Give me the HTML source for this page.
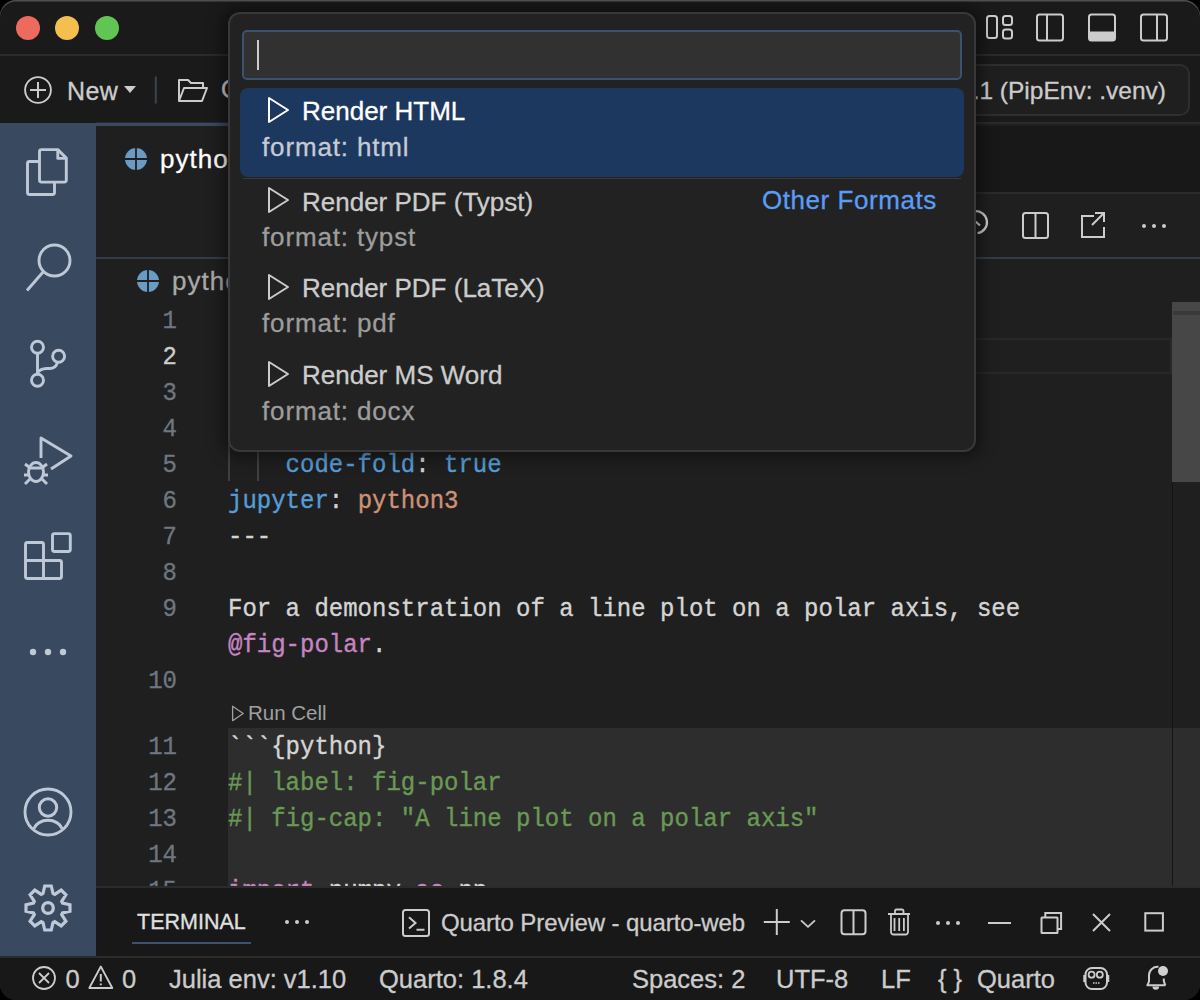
<!DOCTYPE html>
<html><head><meta charset="utf-8">
<style>
*{margin:0;padding:0;box-sizing:border-box}
html,body{width:1200px;height:1000px;overflow:hidden;background:#000}
body{font-family:"Liberation Sans",sans-serif;position:relative}
.win{position:absolute;left:0;top:0;width:1200px;height:1000px;border-radius:16px;overflow:hidden;background:#1f1f1f}
.winb{position:absolute;left:0;top:0;width:1200px;height:1000px;border-radius:16px;box-shadow:inset 0 1.5px 0 #4e4e4e;pointer-events:none;z-index:50}
.abs{position:absolute}
.t{position:absolute;white-space:pre;line-height:1;-webkit-text-stroke:0.3px currentColor}
.dot{position:absolute;width:24px;height:24px;border-radius:50%;top:16px}
.mono{font-family:"Liberation Mono",monospace;font-size:24px}
svg{position:absolute;overflow:visible}
.ln{position:absolute;left:96px;width:81px;transform:scaleY(1.1);transform-origin:0 18.4px;-webkit-text-stroke:0.3px currentColor;text-align:right;font-family:"Liberation Mono",monospace;font-size:24px;line-height:1;color:#6e7681}
.cl{position:absolute;left:228px;transform:scaleY(1.1);transform-origin:0 18.4px;-webkit-text-stroke:0.35px currentColor;font-family:"Liberation Mono",monospace;font-size:24px;line-height:1;white-space:pre;color:#d4d4d4}
.kw{color:#569cd6}.str{color:#ce9178}.cm{color:#6a9955}.pu{color:#c586c0}
.sb{position:absolute;top:967px;font-size:25.5px;line-height:1;white-space:pre;color:#cccccc;-webkit-text-stroke:0.3px currentColor}
</style></head><body>
<div class="win">
  <!-- title bar -->
  <div class="abs" style="left:0;top:0;width:1200px;height:55px;background:#1a1a1a"></div>
  <div class="abs" style="left:0;top:54px;width:1200px;height:2px;background:#2b2b2b"></div>
  <div class="dot" style="left:16px;background:#ec6a5e"></div>
  <div class="dot" style="left:55px;background:#f4bf4f"></div>
  <div class="dot" style="left:95px;background:#61c554"></div>
  <svg style="left:0;top:0" width="1200" height="56" fill="none" stroke="#cccccc" stroke-width="2">
    <rect x="987" y="16" width="10" height="22" rx="2.5"/>
    <rect x="1003" y="16" width="9" height="9" rx="2.5"/>
    <rect x="1003" y="29.5" width="9" height="9" rx="2.5"/>
    <rect x="1037" y="14.5" width="26" height="26" rx="2.5"/>
    <line x1="1047" y1="14.5" x2="1047" y2="40.5"/>
    <rect x="1089" y="14.5" width="26" height="26" rx="2.5"/>
    <path d="M1089 31.5h26v6a3 3 0 0 1 -3 3h-20a3 3 0 0 1 -3 -3z" fill="#cccccc" stroke="none"/>
    <rect x="1141" y="14.5" width="26" height="26" rx="2.5"/>
    <line x1="1157" y1="14.5" x2="1157" y2="40.5"/>
  </svg>

  <!-- toolbar -->
  <div class="abs" style="left:0;top:56px;width:1200px;height:68px;background:#1a1a1a"></div>
  <svg style="left:0;top:0" width="1200" height="124" fill="none" stroke="#cccccc" stroke-width="2">
    <circle cx="38" cy="90" r="12.9" stroke-width="1.9"/>
    <line x1="38" y1="82" x2="38" y2="98"/><line x1="30" y1="90" x2="46" y2="90"/>
    <path d="M124 86h12l-6 7z" fill="#cccccc" stroke="none"/>
    <line x1="155.8" y1="76.5" x2="155.8" y2="103.5" stroke="#3b4350" stroke-width="2"/>
    <path d="M179 101V80h9l3 3h12v5M179 101l5-13h23l-5 13z" stroke-linejoin="round"/>
  </svg>
  <div class="t" style="left:67px;top:78.5px;font-size:25px;letter-spacing:0.4px;color:#cccccc">New</div>
  <div class="t" style="left:221px;top:77px;font-size:25.5px;color:#cccccc">Open</div>
  <div class="abs" style="left:900px;top:64px;width:290px;height:52px;border:2px solid #2e2e2e;border-radius:10px;background:#1f1f1f"></div>
  <div class="t" style="left:959px;top:79px;font-size:24.5px;color:#cccccc">3.1 (PipEnv: .venv)</div>

  <!-- activity bar -->
  <div class="abs" style="left:0;top:123px;width:96px;height:834px;background:#384960"></div>
  <svg style="left:0;top:0" width="96" height="1000" fill="none" stroke="#bfc8d6" stroke-width="2.9" stroke-linejoin="round">
    <path d="M41.5 149.6h16.3l8.5 8.5v22a2 2 0 0 1-2 2H41.5a2 2 0 0 1-2-2V151.6a2 2 0 0 1 2-2z"/>
    <path d="M57.8 149.6v8.8h8.5"/>
    <path d="M39.5 161.5h-10a2 2 0 0 0-2 2v29a2 2 0 0 0 2 2h23a2 2 0 0 0 2-2v-10.3"/>
    <circle cx="54.5" cy="260.5" r="15.5"/>
    <line x1="43.5" y1="271.5" x2="27" y2="290.5"/>
    <circle cx="37.5" cy="347.3" r="6"/><circle cx="58.6" cy="356.3" r="6"/><circle cx="37.5" cy="380.3" r="6"/>
    <path d="M37.5 353.3v21M57.5 362.3c-1 4-4 6.2-8 6.2h-3c-4 0-8.5 2-9 5"/>
    <path d="M41 458V438l30 18l-20 13"/>
    <ellipse cx="36" cy="472" rx="7.5" ry="9.5"/>
    <path d="M28 468h16M24 475h5M43 475h5M25 464l4 3M47 464l-4 3M25 484l5-5M47 484l-5-5"/>
    <path d="M25.5 544.5a2 2 0 0 1 2-2h14a2 2 0 0 1 2 2v16h16a2 2 0 0 1 2 2v14a2 2 0 0 1-2 2H27.5a2 2 0 0 1-2-2z"/>
    <path d="M25.5 560.5h18v18"/>
    <rect x="52.5" y="533.6" width="17.8" height="17.9" rx="2"/>
    <circle cx="48" cy="812" r="23"/>
    <circle cx="48" cy="807.5" r="8.7" stroke-width="3"/>
    <path d="M34 828.5a14.5 11 0 0 1 28 0" stroke-width="3"/>
    <circle cx="48" cy="908" r="5.3" stroke-width="3.3"/>
  </svg>
  <svg style="left:0;top:0" width="96" height="1000">
    <circle cx="33" cy="652" r="3.2" fill="#bfc8d6"/><circle cx="48" cy="652" r="3.2" fill="#bfc8d6"/><circle cx="63" cy="652" r="3.2" fill="#bfc8d6"/>
    <path id="gear" fill="none" stroke="#bfc8d6" stroke-width="3.2" stroke-linejoin="miter" d="M43.0 893.5 L44.7 886.0 L51.3 886.0 L53.0 893.5 L54.7 894.3 L61.2 890.1 L65.9 894.8 L61.7 901.3 L62.5 903.0 L70.0 904.7 L70.0 911.3 L62.5 913.0 L61.7 914.7 L65.9 921.2 L61.2 925.9 L54.7 921.7 L53.0 922.5 L51.3 930.0 L44.7 930.0 L43.0 922.5 L41.3 921.7 L34.8 925.9 L30.1 921.2 L34.3 914.7 L33.5 913.0 L26.0 911.3 L26.0 904.7 L33.5 903.0 L34.3 901.3 L30.1 894.8 L34.8 890.1 L41.3 894.3Z"/>
  </svg>

  <!-- editor -->
  <div class="abs" style="left:96px;top:122px;width:1104px;height:2px;background:#2b2b2b"></div>
  <div class="abs" style="left:96px;top:123px;width:500px;height:3px;background:#3a4a62"></div>
  <div class="abs" style="left:96px;top:126px;width:1104px;height:66px;background:#181818"></div>
  <div class="abs" style="left:96px;top:192px;width:1104px;height:65px;background:#1f1f1f;border-top:2px solid #2b2b2b"></div>
  <div class="abs" style="left:96px;top:126px;width:500px;height:131px;background:#1f1f1f"></div>
  <div class="abs" style="left:96px;top:257px;width:1104px;height:2px;background:#363d48"></div>
  <svg style="left:0;top:0" width="1200" height="300">
    <circle cx="136" cy="159" r="11" fill="#6a9bc3"/>
    <path d="M136 148v22M125 159h22" stroke="#1f1f1f" stroke-width="1.8"/>
    <circle cx="148" cy="281" r="11" fill="#6a9bc3"/>
    <path d="M148 270v22M137 281h22" stroke="#1f1f1f" stroke-width="1.8"/>
  </svg>
  <div class="t" style="left:160px;top:146px;font-size:26px;letter-spacing:1px;color:#ffffff">python.qmd</div>
  <div class="t" style="left:172px;top:268px;font-size:26px;letter-spacing:1px;color:#a9a9a9">python.qmd</div>
  <svg style="left:0;top:0" width="1200" height="300" fill="none" stroke="#cccccc" stroke-width="2">
    <path d="M974.3 211.3A11.0 11.0 0 0 1 977.6 233.1" stroke-width="2.3"/><path d="M975.5 221.5l4.5 4" stroke-width="2.3"/>
    <rect x="1023" y="213" width="25" height="25" rx="2.5"/><line x1="1035.5" y1="213" x2="1035.5" y2="238"/>
    <path d="M1094 216h-12v21h22v-10M1095 213h9v9M1104 213l-12 12"/>
    <circle cx="1144" cy="226" r="2" fill="#cccccc" stroke="none"/><circle cx="1154" cy="226" r="2" fill="#cccccc" stroke="none"/><circle cx="1164" cy="226" r="2" fill="#cccccc" stroke="none"/>
  </svg>

  <!-- current line highlight -->
  <div class="abs" style="left:228px;top:338px;width:944px;height:36px;border:2px solid #282828"></div>
  <!-- scrollbar -->
  
  <div class="abs" style="left:1172px;top:302px;width:28px;height:180px;background:#474747"></div>
  <div class="abs" style="left:1173px;top:311px;width:27px;height:4px;background:#3a3a3a"></div>

  <!-- code cell bg -->
  <div class="abs" style="left:228px;top:728px;width:972px;height:159px;background:#2d2d2d"></div>
  <div class="abs" style="left:1172px;top:482px;width:1px;height:405px;background:#141414"></div>

  <!-- line numbers -->
  <div class="ln" style="top:310px">1</div>
  <div class="ln" style="top:346px;color:#cccccc">2</div>
  <div class="ln" style="top:382px">3</div>
  <div class="ln" style="top:418px">4</div>
  <div class="ln" style="top:454px">5</div>
  <div class="ln" style="top:490px">6</div>
  <div class="ln" style="top:526px">7</div>
  <div class="ln" style="top:562px">8</div>
  <div class="ln" style="top:598px">9</div>
  <div class="ln" style="top:670px">10</div>
  <div class="ln" style="top:736px">11</div>
  <div class="ln" style="top:772px">12</div>
  <div class="ln" style="top:808px">13</div>
  <div class="ln" style="top:844px">14</div>
  <div class="ln" style="top:880px">15</div>

  <!-- indent guides line 5 -->
  <div class="abs" style="left:228px;top:373px;width:2px;height:108px;background:#404040"></div>
  <div class="abs" style="left:257px;top:409px;width:2px;height:72px;background:#404040"></div>

  <div class="cl" style="top:454px">    <span class="kw">code-fold</span>: <span class="kw">true</span></div>
  <div class="cl" style="top:490px"><span class="kw">jupyter</span>: <span class="str">python3</span></div>
  <div class="cl" style="top:526px">---</div>
  <div class="cl" style="top:598px">For a demonstration of a line plot on a polar axis, see</div>
  <div class="cl" style="top:634px"><span class="pu">@fig-polar</span>.</div>
  <svg style="left:0;top:0" width="400" height="740" fill="none" stroke="#a0a0a0" stroke-width="1.3" stroke-linejoin="round">
    <path d="M232.6 706.3v14.4l10.6-7.2z"/>
  </svg>
  <div class="t" style="left:248px;top:703px;font-size:20.5px;color:#a0a0a0;-webkit-text-stroke:0">Run Cell</div>
  <div class="cl" style="top:736px">```{python}</div>
  <div class="cl cm" style="top:772px">#| label: fig-polar</div>
  <div class="cl cm" style="top:808px">#| fig-cap: "A line plot on a polar axis"</div>
  <div class="cl" style="top:880px"><span class="pu">import</span> numpy <span class="pu">as</span> np</div>

  <!-- panel -->
  <div class="abs" style="left:96px;top:886px;width:1104px;height:71px;background:#181818;border-top:2px solid #2b2b2b"></div>
  <div class="t" style="left:137px;top:912px;font-size:21.5px;color:#e0e0e0">TERMINAL</div>
  <div class="abs" style="left:132px;top:942px;width:119px;height:2px;background:#3d5070"></div>
  <svg style="left:0;top:0" width="1200" height="1000" fill="none" stroke="#cccccc" stroke-width="2">
    <circle cx="287" cy="922" r="2" fill="#cccccc" stroke="none"/><circle cx="297" cy="922" r="2" fill="#cccccc" stroke="none"/><circle cx="307" cy="922" r="2" fill="#cccccc" stroke="none"/>
    <rect x="403" y="910" width="26" height="26" rx="2.5"/>
    <path d="M409 917.3l6.5 5.6l-6.5 5.6M416.5 929.8h8"/>
    <path d="M776.8 909v26M763.8 922h26"/>
    <path d="M801 920.3l7 6.5l7-6.5" stroke-width="1.8"/>
    <rect x="841.5" y="910.3" width="24" height="24" rx="3"/><line x1="853.5" y1="910.3" x2="853.5" y2="934.3"/>
    <path d="M888 914h22M895 913.5v-2.5a1.5 1.5 0 0 1 1.5-1.5h5.5a1.5 1.5 0 0 1 1.5 1.5v2.5M891 914.5v17.5a2.5 2.5 0 0 0 2.5 2.5h12a2.5 2.5 0 0 0 2.5-2.5v-17.5M894.5 918v13M899.2 918v13M903.9 918v13" stroke-width="1.8"/>
    <circle cx="938" cy="923" r="2" fill="#cccccc" stroke="none"/><circle cx="948" cy="923" r="2" fill="#cccccc" stroke="none"/><circle cx="958" cy="923" r="2" fill="#cccccc" stroke="none"/>
    <line x1="988" y1="923" x2="1011" y2="923"/>
    <rect x="1041.5" y="917.5" width="16" height="15.5" rx="0.5"/>
    <path d="M1045.3 917.5v-4.5h15.8v16h-3.6"/>
    <path d="M1093 914l17 17M1110 914l-17 17"/>
    <rect x="1145.3" y="913.2" width="17.6" height="17.4"/>
  </svg>
  <div class="t" style="left:441px;top:911px;font-size:24px;letter-spacing:-0.1px;color:#cccccc">Quarto Preview - quarto-web</div>

  <!-- status bar -->
  <div class="abs" style="left:0;top:956px;width:1200px;height:44px;background:#181818;border-top:2px solid #2b2b2b"></div>
  <svg style="left:0;top:0" width="1200" height="1000" fill="none" stroke="#cccccc" stroke-width="1.8">
    <circle cx="44" cy="978" r="11"/>
    <path d="M39 973l10 10M49 973l-10 10"/>
    <path d="M100.8 966.5l-11.5 21.5h23z" stroke-linejoin="round"/>
    <path d="M100.8 974v7.5" stroke-width="2"/><path d="M100.8 983.5v1.8" stroke-width="2"/>
  </svg>
  <div class="sb" style="left:65.5px">0</div>
  <div class="sb" style="left:122px">0</div>
  <div class="sb" style="left:169px">Julia env: v1.10</div>
  <div class="sb" style="left:379px">Quarto: 1.8.4</div>
  <div class="sb" style="left:632px">Spaces: 2</div>
  <div class="sb" style="left:776px">UTF-8</div>
  <div class="sb" style="left:881px">LF</div>
  <div class="sb" style="left:938px">{ }</div>
  <div class="sb" style="left:977px">Quarto</div>
  <svg style="left:0;top:0" width="1200" height="1000" fill="none" stroke="#cccccc" stroke-width="2">
    <rect x="1085.5" y="968" width="21.5" height="21" rx="6.5"/>
    <path d="M1084.5 975v7M1108 975v7" stroke-width="2.5"/>
    <circle cx="1091.6" cy="974.7" r="3" stroke-width="1.8"/><circle cx="1099.8" cy="974.7" r="3" stroke-width="1.8"/>
    <path d="M1093 983h1.5M1095.5 983h1.5M1098 983h1.5" stroke-width="1.6"/>
    <path d="M1146.5 985.3h19M1147.5 985.3l1.5-4v-6a8.5 8.5 0 0 1 9.5-8.5M1163.8 978.5v2.5l1.5 4.3" stroke-width="2"/>
    <path d="M1152.5 986.5a3.3 3.3 0 0 0 6.6 0z" fill="#cccccc" stroke="none"/>
    <circle cx="1163" cy="971" r="5" fill="#d0d0d0" stroke="none"/>
  </svg>

  <!-- quick pick -->
  <div class="abs" style="left:228px;top:12px;width:748px;height:440px;background:#222222;border:2px solid #383838;border-radius:12px;box-shadow:0 0 16px 4px rgba(0,0,0,0.5)"></div>
  <div class="abs" style="left:242px;top:30px;width:720px;height:50px;background:#313131;border:2px solid #3d5170;border-radius:5px"></div>
  <div class="abs" style="left:257px;top:40px;width:2px;height:30px;background:#cccccc"></div>
  <div class="abs" style="left:240px;top:88px;width:724px;height:89px;background:#1d385f;border-radius:8px"></div>
  <div class="abs" style="left:243px;top:178px;width:718px;height:1px;background:#3a3a3a"></div>
  <svg style="left:0;top:0" width="1200" height="460" fill="none" stroke-width="2" stroke-linejoin="round">
    <path d="M269 98v24l19-12z" stroke="#ffffff"/>
    <path d="M269 188v24l19-12z" stroke="#cccccc"/>
    <path d="M269 275v24l19-12z" stroke="#cccccc"/>
    <path d="M269 362v24l19-12z" stroke="#cccccc"/>
  </svg>
  <div class="t" style="left:302px;top:98px;font-size:26px;color:#ffffff">Render HTML</div>
  <div class="t" style="left:262px;top:134px;font-size:26px;letter-spacing:0.85px;color:#c5cbd5">format: html</div>
  <div class="t" style="left:302px;top:189px;font-size:26px;color:#cccccc">Render PDF (Typst)</div>
  <div class="t" style="left:762px;top:187px;font-size:26px;letter-spacing:0.55px;color:#5a9cf8">Other Formats</div>
  <div class="t" style="left:262px;top:224px;font-size:26px;letter-spacing:0.85px;color:#9d9d9d">format: typst</div>
  <div class="t" style="left:302px;top:275px;font-size:26px;color:#cccccc">Render PDF (LaTeX)</div>
  <div class="t" style="left:262px;top:310px;font-size:26px;letter-spacing:0.85px;color:#9d9d9d">format: pdf</div>
  <div class="t" style="left:302px;top:362px;font-size:26px;color:#cccccc">Render MS Word</div>
  <div class="t" style="left:262px;top:398px;font-size:26px;letter-spacing:0.85px;color:#9d9d9d">format: docx</div>
</div>
<div class="winb"></div>
</body></html>
